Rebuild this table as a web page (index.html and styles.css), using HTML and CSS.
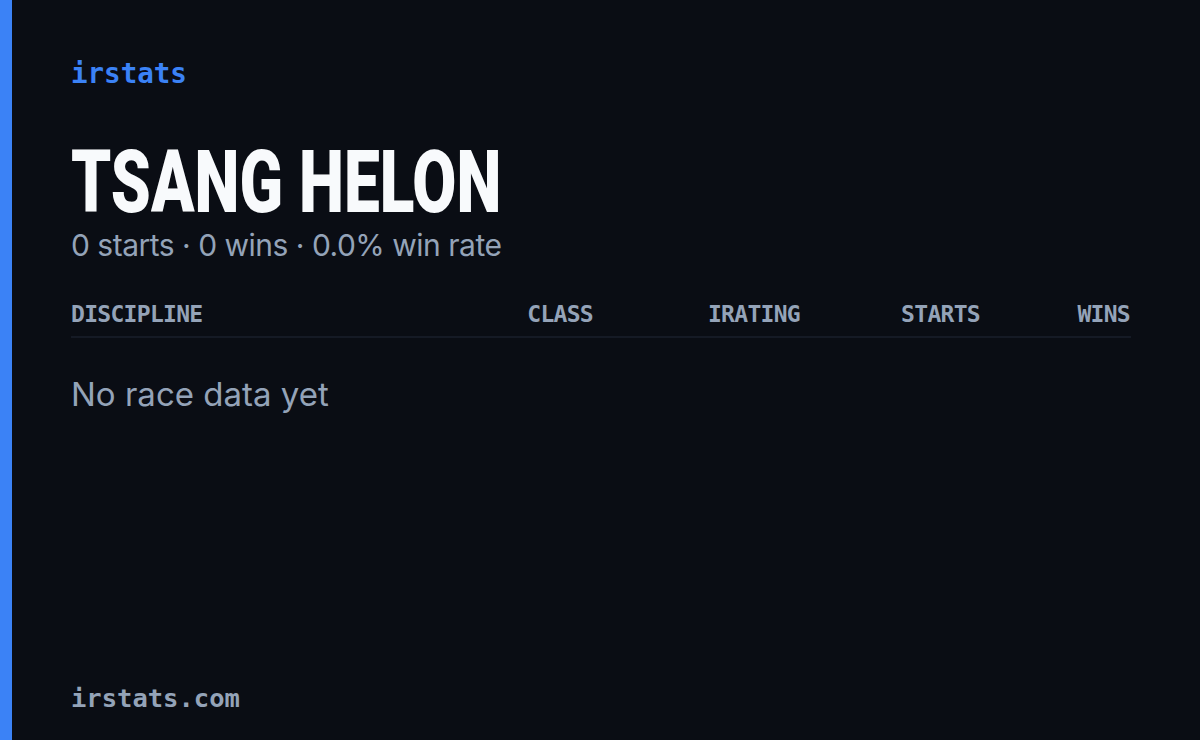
FILE: index.html
```html
<!DOCTYPE html>
<html>
<head>
<meta charset="utf-8">
<link rel="stylesheet" href="styles.css">
</head>
<body>
<div class="card">
  <div class="accent"></div>
  <main class="content">
    <div class="brand">irstats</div>
    <h1 class="name"><span class="name-text">TSANG HELON</span></h1>
    <p class="summary">0 starts · 0 wins · 0.0% win rate</p>
    <div class="table-head">
      <span class="col col-left">DISCIPLINE</span>
      <span class="col">CLASS</span>
      <span class="col">IRATING</span>
      <span class="col">STARTS</span>
      <span class="col">WINS</span>
    </div>
    <p class="empty">No race data yet</p>
    <div class="footer">irstats.com</div>
  </main>
</div>
</body>
</html>
```

FILE: styles.css
```css
html, body {
  margin: 0;
  padding: 0;
  background: #0a0d14;
}

.card {
  display: flex;
  width: 1200px;
  height: 740px;
  background: #0a0d14;
  overflow: hidden;
}

.accent {
  width: 12px;
  flex: 0 0 12px;
  background: #3b82f6;
}

.content {
  flex: 1;
  display: flex;
  flex-direction: column;
  padding: 0 69px 0 59px;
}

.brand {
  margin-top: 55px;
  font-family: "DejaVu Sans Mono", "Liberation Mono", monospace;
  font-size: 27.5px;
  line-height: 36px;
  font-weight: 600;
  color: #3b82f6;
}

.name {
  margin: 55px 0 0;
  font-family: "Roboto", "Liberation Sans", sans-serif;
  font-weight: 900;
  font-size: 88px;
  line-height: 72px;
  color: #f8fafc;
  white-space: nowrap;
}

.name-text {
  display: inline-block;
  transform: scaleX(0.727);
  transform-origin: left center;
}

.summary {
  margin: 8px 0 0;
  font-family: "Inter", "Open Sans", sans-serif;
  font-size: 30px;
  letter-spacing: -0.5px;
  line-height: 38px;
  color: #94a3b8;
}

.table-head {
  margin-top: 37px;
  display: grid;
  grid-template-columns: 429px 93px 207px 180px 150px;
  padding-bottom: 9px;
  border-bottom: 2px solid #151a25;
  font-family: "DejaVu Sans Mono", "Liberation Mono", monospace;
  font-size: 23px;
  letter-spacing: -0.7px;
  line-height: 26px;
  font-weight: 600;
  color: #94a3b8;
}

.col {
  text-align: right;
}

.col-left {
  text-align: left;
}

.empty {
  margin: 36px 0 0;
  font-family: "Inter", "Open Sans", sans-serif;
  font-size: 33px;
  line-height: 40px;
  color: #94a3b8;
}

.footer {
  margin-top: auto;
  margin-bottom: 25px;
  font-family: "DejaVu Sans Mono", "Liberation Mono", monospace;
  font-size: 25.5px;
  line-height: 34px;
  font-weight: 600;
  color: #94a3b8;
}
```
